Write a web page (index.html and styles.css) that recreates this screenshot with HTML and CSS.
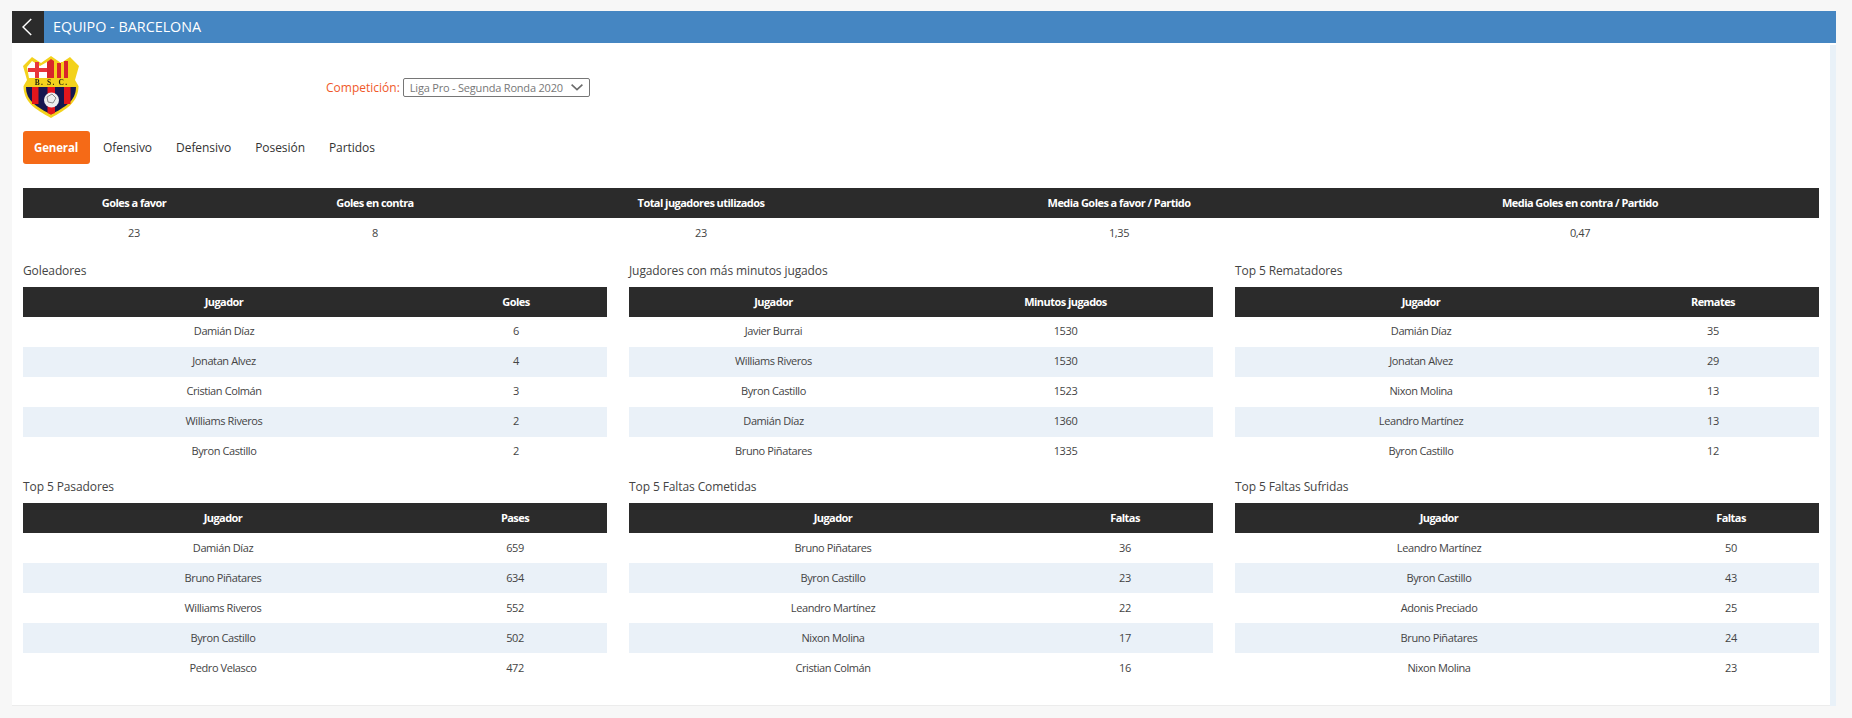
FILE: index.html
```html
<!DOCTYPE html>
<html lang="es">
<head>
<meta charset="utf-8">
<title>Equipo - Barcelona</title>
<link rel="stylesheet" href="styles.css">
</head>
<body>
<div class="page">
  <header class="bar">
    <a class="back" href="#" aria-label="Volver">
      <svg width="10" height="18" viewBox="0 0 10 18"><polyline points="9.2,1 1,9 9.2,17" fill="none" stroke="#fff" stroke-width="1.5"/></svg>
    </a>
    <h1 class="bar-title">EQUIPO - BARCELONA</h1>
  </header>
  <div class="panel">
    <main class="content">
      <div class="top">
        <svg class="crest" width="56" height="62" viewBox="0 0 56 62">
          <defs><filter id="soft"><feGaussianBlur stdDeviation="0.5"/></filter></defs>
          <g filter="url(#soft)">
            <path d="M0 10 L9 1 L18 7 L28 0 L38 7 L47 1 L56 10 L52 24 L55.500 30 C55.500 46 44 53 28 62 C12 53 0.500 46 0.500 30 L4 24 Z" fill="#f3d21c"/>
            <path d="M4 11 L9 5 L17 10 L24 6 L24 22 L6 22 Z" fill="#fff"/>
            <rect x="12" y="6" width="4" height="16" fill="#e8353b"/>
            <rect x="5" y="12" width="19" height="4" fill="#e8353b"/>
            <path d="M24 6 L28 3 L31 5 L31 22 L24 22 Z" fill="#d9252b"/>
            <rect x="31" y="5" width="3" height="17" fill="#f3d21c"/>
            <rect x="34" y="7" width="4" height="15" fill="#d9252b"/>
            <rect x="38" y="6" width="3" height="16" fill="#f3d21c"/>
            <rect x="41" y="5" width="4" height="17" fill="#d9252b"/>
            <path d="M45 6 L50 11 L49 22 L45 22 Z" fill="#f3d21c"/>
            <path d="M3 31 L53 31 C53 45 42 51 28 58.500 C14 51 3 45 3 31 Z" fill="#15174f"/>
            <rect x="9" y="31" width="6.500" height="17" fill="#e3161f"/>
            <path d="M24.500 31 H32 V57 L28 58.500 L24.500 57 Z" fill="#e3161f"/>
            <rect x="41" y="31" width="6.500" height="17" fill="#e3161f"/>
            <circle cx="28.500" cy="44" r="7.500" fill="#eeeeee"/>
            <path d="M24 41 L29 38 L33 42 L30 47 L25 46 Z" fill="none" stroke="#8a8a8a" stroke-width="1"/>
            <text class="crest-text" x="28.500" y="29">B. S. C.</text>
          </g>
        </svg>
        <div class="competition">
          <span class="competition-label">Competición:</span>
          <div class="select">
            <span>Liga Pro - Segunda Ronda 2020</span>
            <svg width="12" height="7" viewBox="0 0 12 7"><polyline points="0.600,0.600 6,5.600 11.400,0.600" fill="none" stroke="#6b6b6b" stroke-width="1.600"/></svg>
          </div>
        </div>
      </div>

      <nav class="tabs">
        <a class="tab active" href="#">General</a>
        <a class="tab" href="#">Ofensivo</a>
        <a class="tab" href="#">Defensivo</a>
        <a class="tab" href="#">Posesión</a>
        <a class="tab" href="#">Partidos</a>
      </nav>

      <table class="stats summary">
        <colgroup><col class="s1"><col class="s2"><col class="s3"><col class="s4"><col class="s5"></colgroup>
        <thead><tr><th>Goles a favor</th><th>Goles en contra</th><th>Total jugadores utilizados</th><th>Media Goles a favor / Partido</th><th>Media Goles en contra / Partido</th></tr></thead>
        <tbody><tr><td>23</td><td>8</td><td>23</td><td>1,35</td><td>0,47</td></tr></tbody>
      </table>

      <div class="blocks">
        <section>
          <h2 class="block-title">Goleadores</h2>
          <table class="stats">
            <colgroup><col class="w402"><col></colgroup>
            <thead><tr><th>Jugador</th><th>Goles</th></tr></thead>
            <tbody>
              <tr><td>Damián Díaz</td><td>6</td></tr>
              <tr><td>Jonatan Alvez</td><td>4</td></tr>
              <tr><td>Cristian Colmán</td><td>3</td></tr>
              <tr><td>Williams Riveros</td><td>2</td></tr>
              <tr><td>Byron Castillo</td><td>2</td></tr>
            </tbody>
          </table>
        </section>
        <section>
          <h2 class="block-title">Jugadores con más minutos jugados</h2>
          <table class="stats">
            <colgroup><col class="w289"><col></colgroup>
            <thead><tr><th>Jugador</th><th>Minutos jugados</th></tr></thead>
            <tbody>
              <tr><td>Javier Burrai</td><td>1530</td></tr>
              <tr><td>Williams Riveros</td><td>1530</td></tr>
              <tr><td>Byron Castillo</td><td>1523</td></tr>
              <tr><td>Damián Díaz</td><td>1360</td></tr>
              <tr><td>Bruno Piñatares</td><td>1335</td></tr>
            </tbody>
          </table>
        </section>
        <section>
          <h2 class="block-title">Top 5 Rematadores</h2>
          <table class="stats">
            <colgroup><col class="w372"><col></colgroup>
            <thead><tr><th>Jugador</th><th>Remates</th></tr></thead>
            <tbody>
              <tr><td>Damián Díaz</td><td>35</td></tr>
              <tr><td>Jonatan Alvez</td><td>29</td></tr>
              <tr><td>Nixon Molina</td><td>13</td></tr>
              <tr><td>Leandro Martínez</td><td>13</td></tr>
              <tr><td>Byron Castillo</td><td>12</td></tr>
            </tbody>
          </table>
        </section>
        <section>
          <h2 class="block-title">Top 5 Pasadores</h2>
          <table class="stats">
            <colgroup><col class="w400"><col></colgroup>
            <thead><tr><th>Jugador</th><th>Pases</th></tr></thead>
            <tbody>
              <tr><td>Damián Díaz</td><td>659</td></tr>
              <tr><td>Bruno Piñatares</td><td>634</td></tr>
              <tr><td>Williams Riveros</td><td>552</td></tr>
              <tr><td>Byron Castillo</td><td>502</td></tr>
              <tr><td>Pedro Velasco</td><td>472</td></tr>
            </tbody>
          </table>
        </section>
        <section>
          <h2 class="block-title">Top 5 Faltas Cometidas</h2>
          <table class="stats">
            <colgroup><col class="w408"><col></colgroup>
            <thead><tr><th>Jugador</th><th>Faltas</th></tr></thead>
            <tbody>
              <tr><td>Bruno Piñatares</td><td>36</td></tr>
              <tr><td>Byron Castillo</td><td>23</td></tr>
              <tr><td>Leandro Martínez</td><td>22</td></tr>
              <tr><td>Nixon Molina</td><td>17</td></tr>
              <tr><td>Cristian Colmán</td><td>16</td></tr>
            </tbody>
          </table>
        </section>
        <section>
          <h2 class="block-title">Top 5 Faltas Sufridas</h2>
          <table class="stats">
            <colgroup><col class="w408"><col></colgroup>
            <thead><tr><th>Jugador</th><th>Faltas</th></tr></thead>
            <tbody>
              <tr><td>Leandro Martínez</td><td>50</td></tr>
              <tr><td>Byron Castillo</td><td>43</td></tr>
              <tr><td>Adonis Preciado</td><td>25</td></tr>
              <tr><td>Bruno Piñatares</td><td>24</td></tr>
              <tr><td>Nixon Molina</td><td>23</td></tr>
            </tbody>
          </table>
        </section>
      </div>
    </main>
    <div class="strip"></div>
  </div>
</div>
</body>
</html>
```

FILE: styles.css
```css
* { box-sizing: border-box; }
html, body { margin: 0; height: 100%; }
body {
  background: #f7f7f7;
  color: #333;
  font-family: "Open Sans", "Liberation Sans", sans-serif;
  font-size: 11px;
  overflow: hidden;
}
.page { padding: 11px 16px 0 12px; }

.bar { display: flex; align-items: stretch; height: 32px; background: #4586c2; }
.back { width: 32px; background: #2b2b2b; display: flex; align-items: center; justify-content: center; padding-right: 3px; }
.bar-title { margin: 0 0 0 9px; font-size: 14.350px; font-weight: 400; line-height: 32px; color: #fff; }

.panel { display: flex; height: 663px; background: #fff; }
.content { flex: 1; min-width: 0; padding: 0 11px; border-bottom: 1px solid #ececec; }
.strip { width: 6px; margin-top: 2px; background: #e9f1f8; }

.top { display: flex; align-items: flex-start; height: 88px; padding-top: 13px; }
.crest { flex: none; }
.crest-text { font-family: "Liberation Serif", serif; font-size: 7.500px; font-weight: 700; letter-spacing: 1.200px; fill: #23210f; text-anchor: middle; }
.competition { display: flex; align-items: center; gap: 3px; margin: 22px 0 0 247px; }
.competition-label { color: #f0582a; font-size: 12px; line-height: 19px; }
.select { display: flex; align-items: center; justify-content: space-between; width: 187px; height: 19px; padding: 0 6px; border: 1px solid #767676; border-radius: 2px; color: #777; font-size: 11px; letter-spacing: -0.200px; }

.tabs { display: flex; height: 33px; margin-bottom: 24px; }
.tab { display: flex; align-items: center; padding: 0 12px; color: #333; font-size: 12px; font-weight: 500; letter-spacing: -0.050px; text-decoration: none; }
.tab.active { width: 67px; margin-right: 1px; padding: 0 0 0 11px; background: #f56a17; border-radius: 3px; color: #fff; font-size: 11.500px; font-weight: 700; letter-spacing: -0.150px; }

.stats { width: 100%; border-collapse: collapse; table-layout: fixed; }
.stats th { height: 30px; padding: 0 0 2px; background: #2b2b2b; color: #fff; font-size: 11px; font-weight: 700; letter-spacing: -0.550px; text-align: center; }
.stats td { height: 30px; padding: 0 0 2px; color: #444; letter-spacing: -0.400px; text-align: center; }
.stats tbody tr:nth-child(even) td { background: #eaf1f8; }
.blocks section:nth-child(-n+3) td { padding-bottom: 4px; }

.s1 { width: 222px; }
.s2 { width: 260px; }
.s3 { width: 392px; }
.s4 { width: 444px; }
.w402 { width: 402px; }
.w289 { width: 289px; }
.w372 { width: 372px; }
.w400 { width: 400px; }
.w408 { width: 408px; }

.blocks { display: grid; grid-template-columns: repeat(3, 1fr); column-gap: 22px; row-gap: 4px; margin-top: 7px; }
.block-title { margin: 0; font-size: 12px; font-weight: 400; letter-spacing: -0.100px; line-height: 32px; color: #444; }
```
